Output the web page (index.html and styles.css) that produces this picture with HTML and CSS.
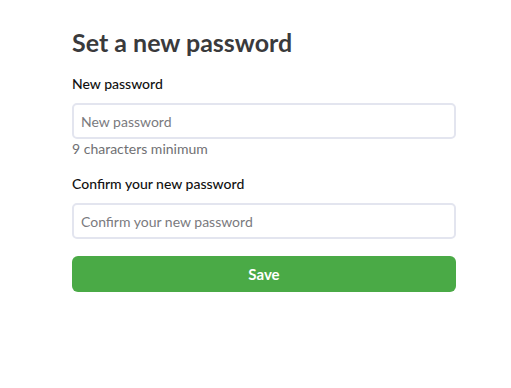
FILE: index.html
```html
<!DOCTYPE html>
<html>
<head>
<meta charset="utf-8">
<link rel="stylesheet" href="styles.css">
</head>
<body>
<main class="page">
  <h1 class="title">Set a new password</h1>
  <form class="form">
    <div class="field">
      <label class="label" for="pw">New password</label>
      <input class="input" id="pw" type="password" placeholder="New password">
      <div class="hint">9 characters minimum</div>
    </div>
    <div class="field">
      <label class="label" for="pw2">Confirm your new password</label>
      <input class="input" id="pw2" type="password" placeholder="Confirm your new password">
    </div>
    <button class="btn" type="button">Save</button>
  </form>
</main>
</body>
</html>
```
FILE: styles.css
```css
html, body {
  margin: 0;
  background: #fff;
}
body {
  font-family: "Lato", "Open Sans", sans-serif;
  color: #111;
}
.page {
  width: 384px;
  margin-left: 72px;
  padding-top: 27px;
}
.title {
  margin: 0;
  font-size: 25px;
  line-height: 30px;
  font-weight: 700;
  color: #3a3a3c;
}
.form {
  display: flex;
  flex-direction: column;
  margin-top: 18px;
}
.field {
  display: flex;
  flex-direction: column;
  margin-bottom: 17px;
}
.label {
  font-size: 14px;
  line-height: 18px;
  font-weight: 500;
  color: #111;
  margin-bottom: 10px;
}
.input {
  box-sizing: border-box;
  height: 36px;
  width: 100%;
  border: 2px solid #e3e5ef;
  border-radius: 5px;
  padding: 0 7px;
  font-family: inherit;
  font-size: 14px;
  color: #333;
  outline: none;
}
.input::placeholder {
  color: #7a7a7e;
}
.hint {
  margin-top: 1px;
  font-size: 14px;
  line-height: 18px;
  color: #707073;
}
.btn {
  height: 36px;
  width: 100%;
  border: none;
  border-radius: 6px;
  background: #4aaa46;
  color: #fff;
  font-family: inherit;
  font-size: 15px;
  font-weight: 700;
}
```
